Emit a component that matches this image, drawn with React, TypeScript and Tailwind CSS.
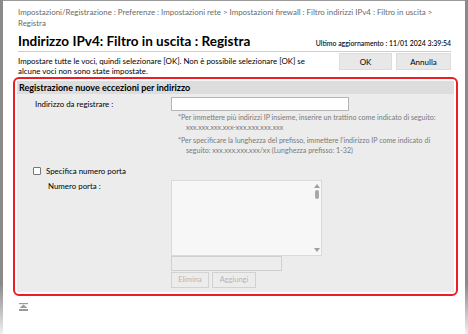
import React from "react";

const font = { fontFamily: 'Lato, "Open Sans", Arial, sans-serif' };

export default function App() {
  return (
    <div className="w-[468px] h-[334px] bg-white flex overflow-hidden text-black" style={font}>
      <div className="w-[3px] shrink-0 h-full bg-gradient-to-b from-[#8a8a8a] via-[#8a8a8a] via-85% to-[#f0f0f0]" />
      <div className="flex-1 min-w-0 flex flex-col border-t border-[#9a9a9a] pl-[15px] pr-[14px]">
        <div className="pt-[6px] text-[7.9px] leading-[11px] text-[#6a6a6a] whitespace-nowrap">
          Impostazioni/Registrazione : Preferenze : Impostazioni rete &gt; Impostazioni firewall : Filtro indirizzi IPv4 : Filtro in uscita &gt;
          <br />
          Registra
        </div>
        <div className="flex items-end justify-between border-b border-[#cfcfcf] pb-[2px] mt-[4px]">
          <div className="text-[13.5px] font-bold leading-[16px] whitespace-nowrap">Indirizzo IPv4: Filtro in uscita : Registra</div>
          <div className="text-[6.9px] leading-[10px] mb-[1px] whitespace-nowrap font-medium">Ultimo aggiornamento : 11/01 2024 3:39:54</div>
        </div>
        <div className="flex justify-between">
          <div className="text-[7.9px] leading-[10px] pt-[4px] whitespace-nowrap">
            Impostare tutte le voci, quindi selezionare [OK]. Non è possibile selezionare [OK] se
            <br />
            alcune voci non sono state impostate.
          </div>
          <div className="flex gap-[4px] pt-[1px]">
            <div className="w-[53px] h-[17px] bg-[#e8e8e8] border border-[#dcdcdc] flex items-center justify-center text-[8px]">OK</div>
            <div className="w-[55px] h-[17px] bg-[#e8e8e8] border border-[#dcdcdc] flex items-center justify-center text-[8px]">Annulla</div>
          </div>
        </div>
        <div className="ml-[-5px] mr-[-7px] mt-[1px] border-[2px] border-[#ee1c25] rounded-[6px] p-[2px] bg-white">
          <div className="bg-[#ececec] flex flex-col pb-[4px]">
            <div className="bg-[#dddddd] h-[13px] px-[2px] text-[9px] font-bold leading-[13px] whitespace-nowrap">Registrazione nuove eccezioni per indirizzo</div>
            <div className="flex mt-[3px]">
              <div className="w-[154px] pl-[18px] text-[7.9px] leading-[14px] whitespace-nowrap">Indirizzo da registrare :</div>
              <div className="flex flex-col">
                <div className="w-[178px] h-[14px] bg-white border border-[#b5b5b5]" />
                <div className="mt-[2px] pl-[7px] text-[7.1px] leading-[10px] text-[#7a7a7a] whitespace-nowrap">
                  <div>*Per immettere più indirizzi IP insieme, inserire un trattino come indicato di seguito:</div>
                  <div className="pl-[8px]">xxx.xxx.xxx.xxx-xxx.xxx.xxx.xxx</div>
                  <div className="mt-[3px]">*Per specificare la lunghezza del prefisso, immettere l'indirizzo IP come indicato di</div>
                  <div className="pl-[8px]">seguito: xxx.xxx.xxx.xxx/xx (Lunghezza prefisso: 1-32)</div>
                </div>
              </div>
            </div>
            <div className="flex items-center mt-[9px] pl-[16px] gap-[5px]">
              <div className="w-[8px] h-[8px] bg-white border border-[#777] rounded-[1px]" />
              <div className="text-[7.9px] leading-[12px]">Specifica numero porta</div>
            </div>
            <div className="flex mt-[3px]">
              <div className="w-[154px] pl-[31px] text-[7.9px] leading-[12px]">Numero porta :</div>
              <div className="flex flex-col">
                <div className="w-[151px] h-[76px] bg-[#f7f7f7] border border-[#dadada] flex justify-end">
                  <div className="w-[9px] flex flex-col items-center py-[3px]">
                    <svg width="6" height="4" viewBox="0 0 6 4"><path d="M0 4 L3 0 L6 4 Z" fill="#a0a0a0" /></svg>
                    <div className="w-[4px] h-[9px] rounded-[2px] bg-[#a8a8a8] mt-[2px]" />
                    <div className="flex-1" />
                    <svg width="6" height="4" viewBox="0 0 6 4"><path d="M0 0 L3 4 L6 0 Z" fill="#a0a0a0" /></svg>
                  </div>
                </div>
                <div className="w-[111px] h-[15px] bg-[#ededed] border border-[#d0d0d0]" />
                <div className="flex gap-[3px] mt-[1px]">
                  <div className="w-[38px] h-[16px] border border-[#d2d2d2] flex items-center justify-center text-[7.4px] text-[#b5b5b5]">Elimina</div>
                  <div className="w-[44px] h-[16px] border border-[#d2d2d2] flex items-center justify-center text-[7.4px] text-[#b5b5b5]">Aggiungi</div>
                </div>
              </div>
            </div>
          </div>
        </div>
        <div className="mt-[7px] pl-[1px]">
          <svg width="9" height="8" viewBox="0 0 9 8">
            <rect x="0" y="0" width="9" height="1.2" fill="#9a9a9a" />
            <path d="M4.5 1.5 L8.5 5 L0.5 5 Z" fill="#9a9a9a" />
            <rect x="0" y="6" width="9" height="2" fill="#9a9a9a" />
          </svg>
        </div>
      </div>
      <div className="w-[3px] shrink-0 h-full bg-gradient-to-b from-[#8a8a8a] via-[#8a8a8a] via-85% to-[#f0f0f0]" />
    </div>
  );
}
